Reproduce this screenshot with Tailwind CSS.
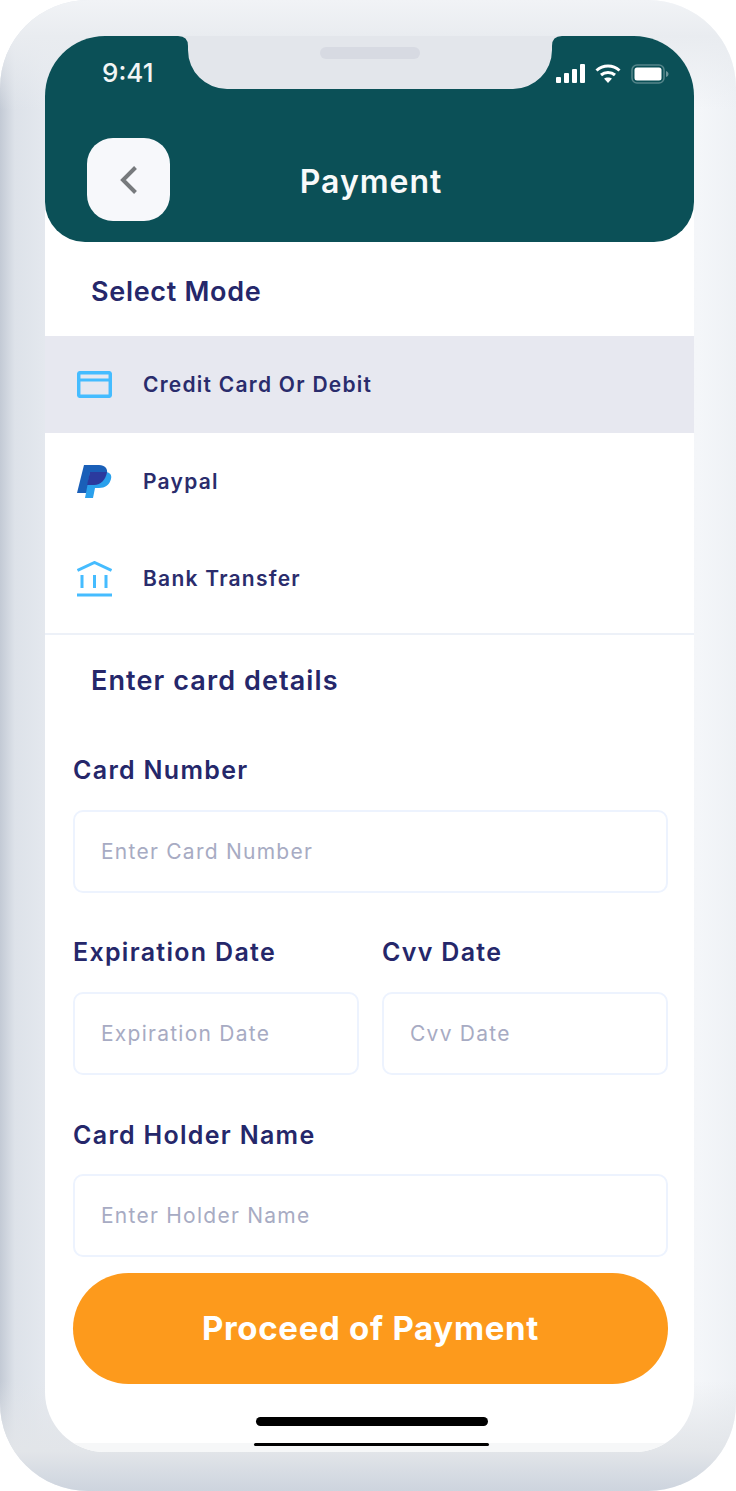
<!DOCTYPE html>
<html lang="en">
<head>
    <meta charset="UTF-8">
    <title>Payment</title>
    <script src="https://cdn.jsdelivr.net/npm/@tailwindcss/browser@4"></script>
</head>
<body class="bg-white">
    <!-- phone frame -->
    <div class="relative w-[736px] h-[1491px] overflow-hidden rounded-[88px] pt-[36px] pl-[45px] bg-[linear-gradient(90deg,#c3cad5_0%,#dde2e9_2%,#e4e8ee_6%,#eef0f4_50%,#f4f6f9_95%,#eef1f5_100%)] font-['Inter',sans-serif]">
        <div class="absolute inset-x-0 top-0 h-[110px] bg-[linear-gradient(180deg,#f1f3f6_0%,#e9ecf0_33%,#e9ecf000_100%)]"></div>
        <div class="absolute inset-x-0 bottom-0 h-[110px] bg-[linear-gradient(180deg,#e2e5e900_0%,#e2e5e9_64%,#cdd4de_100%)]"></div>

        <div class="relative flex flex-col w-[649px] h-[1416px] rounded-[60px] overflow-hidden bg-white">
            <!-- header -->
            <div class="relative shrink-0 h-[206px] bg-[#0b5057] rounded-b-[40px]">
                <svg class="absolute left-0 top-0" width="649" height="54" viewBox="0 0 649 54">
                    <path d="M133 0Q143 0 143 10V14A39 39 0 0 0 182 53H468A39 39 0 0 0 507 14V10Q507 0 517 0Z" fill="#e3e6eb"/>
                    <rect x="275" y="11" width="100" height="12" rx="6" fill="#d7dae2"/>
                </svg>
                <span class="absolute left-[57px] top-[22px] text-[26px] leading-[30px] font-medium text-[#f2f5f5]">9:41</span>
                <div class="absolute left-[511px] top-[28px] flex items-center gap-[10px]">
                    <svg width="29" height="20" viewBox="0 0 29 20" fill="#fff">
                        <rect x="0" y="13" width="5" height="6" rx="1"/>
                        <rect x="8" y="9" width="5" height="10" rx="1"/>
                        <rect x="16" y="5" width="5" height="14" rx="1"/>
                        <rect x="24" y="0" width="5" height="19" rx="1"/>
                    </svg>
                    <svg width="26" height="20" viewBox="0 0 26 20" fill="none" stroke="#fff" stroke-width="3">
                        <path d="M1.500 6.500C8 .5 18 .5 24.500 6.500"/>
                        <path d="M6 11C10 7.500 16 7.500 20 11"/>
                        <path d="M13 19l-4-4.500C11 13 15 13 17 14.500z" fill="#fff" stroke="none"/>
                    </svg>
                    <svg width="38" height="20" viewBox="0 0 38 20">
                        <rect x="1" y="1" width="32" height="18" rx="5" fill="none" stroke="#fff" stroke-opacity=".3" stroke-width="1.500"/>
                        <rect x="3.500" y="3.500" width="27" height="13" rx="2.500" fill="#fff"/>
                        <path d="M35 7v6c1.500-.5 2.500-1.500 2.500-3S36.500 7.500 35 7z" fill="#fff" fill-opacity=".4"/>
                    </svg>
                </div>
                <button class="absolute left-[42px] top-[102px] flex items-center justify-center w-[83px] h-[83px] rounded-[26px] bg-[#f7f8fb]">
                    <svg width="20" height="30" viewBox="0 0 20 30" fill="none" stroke="#777a7d" stroke-width="4">
                        <path d="M16.500 2.500L4 15l12.500 12.500"/>
                    </svg>
                </button>
                <h1 class="pt-[123px] pl-[3px] text-center text-[32px] leading-[46px] font-semibold tracking-[1px] text-[#f8fafa]">Payment</h1>
            </div>

            <!-- payment mode -->
            <h2 class="pl-[46px] pt-[33px] pb-[27px] text-[27px] leading-[34px] font-semibold tracking-[.7px] text-[#25276a]">Select Mode</h2>
            <div class="flex items-center gap-[31px] h-[97px] pl-[32px] bg-[#e7e8f0]">
                <svg width="35" height="27" viewBox="0 0 35 27" fill="none" stroke="#45bcff" stroke-width="3.500">
                    <rect x="1.700" y="1.700" width="31.600" height="23.600" rx="1.500"/>
                    <path d="M2 9h31" stroke-width="3"/>
                </svg>
                <span class="text-[21px] font-semibold tracking-[1.250px] text-[#2a2c6c]">Credit Card Or Debit</span>
            </div>
            <div class="flex items-center gap-[31px] h-[97px] pl-[32px]">
                <svg width="35" height="33" viewBox="0 0 35 33">
                    <path d="M7 0h15c6 0 9 3.500 8 9-1.500 7-6 11-13 11h-4l-2 8H0z" fill="#1a5fb8"/>
                    <path d="M13 7h15c5 0 7 3 6 7-1.500 6-6 9-12 9h-4l-2 10H8z" fill="#2aa0ec"/>
                    <path d="M13 7h17c-1 7-6 13-13 13h-7z" fill="#2b3a9e"/>
                </svg>
                <span class="text-[21px] font-semibold tracking-[1.250px] text-[#2a2c6c]">Paypal</span>
            </div>
            <div class="flex items-center gap-[31px] h-[97px] pl-[32px]">
                <svg width="35" height="36" viewBox="0 0 35 36" fill="none" stroke="#45bcff" stroke-width="3">
                    <path d="M0.500 9.500L17.500 1.500l17 8"/>
                    <path d="M5 14v13M17.500 14v13M29 14v13"/>
                    <path d="M0 34h35"/>
                </svg>
                <span class="text-[21px] font-semibold tracking-[1.250px] text-[#2a2c6c]">Bank Transfer</span>
            </div>
            <div class="mt-[6px] h-[2px] bg-[#edf1f8]"></div>

            <!-- card form -->
            <h2 class="pl-[46px] pt-[29px] pb-[55px] text-[27px] leading-[34px] font-semibold tracking-[1.100px] text-[#25276a]">Enter card details</h2>
            <div class="flex flex-col gap-[42px] px-[28px] mr-[-2px]">
                <div>
                    <label class="block mb-[23px] text-[25px] leading-[34px] font-semibold tracking-[1.300px] text-[#25276a]">Card Number</label>
                    <input class="w-full h-[83px] pl-[26px] rounded-[10px] border-2 border-[#edf3fe] outline-none text-[21px] tracking-[1.250px] placeholder:text-[#a7abc3]" placeholder="Enter Card Number">
                </div>
                <div class="flex gap-[23px]">
                    <div class="w-[287px]">
                        <label class="block mb-[23px] text-[25px] leading-[34px] font-semibold tracking-[1.300px] text-[#25276a]">Expiration Date</label>
                        <input class="w-full h-[83px] pl-[26px] rounded-[10px] border-2 border-[#edf3fe] outline-none text-[21px] tracking-[1.250px] placeholder:text-[#a7abc3]" placeholder="Expiration Date">
                    </div>
                    <div class="w-[287px]">
                        <label class="block mb-[23px] text-[25px] leading-[34px] font-semibold tracking-[1.300px] text-[#25276a]">Cvv Date</label>
                        <input class="w-full h-[83px] pl-[26px] rounded-[10px] border-2 border-[#edf3fe] outline-none text-[21px] tracking-[1.250px] placeholder:text-[#a7abc3]" placeholder="Cvv Date">
                    </div>
                </div>
                <div class="mt-[1px]">
                    <label class="block mb-[22px] text-[25px] leading-[34px] font-semibold tracking-[1.300px] text-[#25276a]">Card Holder Name</label>
                    <input class="w-full h-[83px] pl-[26px] rounded-[10px] border-2 border-[#edf3fe] outline-none text-[21px] tracking-[1.250px] placeholder:text-[#a7abc3]" placeholder="Enter Holder Name">
                </div>
            </div>
            <button class="shrink-0 mx-[28px] mt-[16px] h-[111px] w-[595px] rounded-full bg-[#fd9a1c] text-[33px] font-bold tracking-[.7px] text-white">Proceed of Payment</button>

            <!-- home indicator -->
            <div class="shrink-0 mt-[33px] ml-[211px] w-[232px] h-[9px] rounded-full bg-black"></div>
            <div class="absolute left-0 right-0 bottom-0 h-[9px] bg-[#f6f7f8]"></div>
            <div class="absolute left-[209px] bottom-[6px] w-[235px] h-[3px] rounded-full bg-black"></div>
        </div>
    </div>
</body>
</html>
